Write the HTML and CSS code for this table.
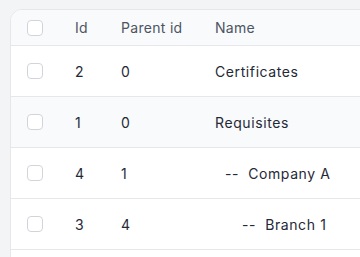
FILE: index.html
```html
<!DOCTYPE html>
<html lang="en">
<head>
    <meta charset="UTF-8">
    <meta name="viewport" content="width=device-width, initial-scale=1.0">
    <title>Categories</title>
    <link rel="stylesheet" href="styles.css">
</head>
<body>
    <div id="page">
        <div id="table-card">
            <table>
                <thead>
                    <tr>
                        <th class="check-cell"><span class="checkbox"></span></th>
                        <th class="id-col">Id</th>
                        <th class="parent-col">Parent id</th>
                        <th class="name-col">Name</th>
                    </tr>
                </thead>
                <tbody>
                    <tr>
                        <td class="check-cell"><span class="checkbox"></span></td>
                        <td>2</td>
                        <td>0</td>
                        <td>Certificates</td>
                    </tr>
                    <tr class="striped">
                        <td class="check-cell"><span class="checkbox"></span></td>
                        <td>1</td>
                        <td>0</td>
                        <td>Requisites</td>
                    </tr>
                    <tr>
                        <td class="check-cell"><span class="checkbox"></span></td>
                        <td>4</td>
                        <td>1</td>
                        <td><span class="level-1">--&nbsp; Company A</span></td>
                    </tr>
                    <tr>
                        <td class="check-cell"><span class="checkbox"></span></td>
                        <td>3</td>
                        <td>4</td>
                        <td><span class="level-2">--&nbsp; Branch 1</span></td>
                    </tr>
                </tbody>
            </table>
        </div>
    </div>
</body>
</html>
```

FILE: styles.css
```css
body {
    margin: 0;
    font-family: Inter, "Liberation Sans", sans-serif;
    background-color: #f3f4f6;
    overflow: hidden;
}

#page {
    padding: 9px 0 0 10px;
}

#table-card {
    width: 520px;
    padding-bottom: 40px;
    background-color: #fff;
    border: 1px solid #e5e7eb;
    border-radius: 12px 0 0 0;
    overflow: hidden;
}

table {
    width: 100%;
    border-collapse: collapse;
    font-size: 14px;
    letter-spacing: 0.6px;
}

th {
    height: 35px;
    padding: 0 16px;
    text-align: left;
    font-weight: 400;
    letter-spacing: 0.3px;
    color: #4b5563;
    background-color: #f9fafb;
    white-space: nowrap;
}

td {
    height: 50px;
    padding: 0 16px;
    color: #1f2937;
    border-top: 1px solid #e5e7eb;
    white-space: nowrap;
}

thead tr {
    border-bottom: 1px solid #e5e7eb;
}

tbody tr:last-child {
    border-bottom: 1px solid #e5e7eb;
}

tr.striped td {
    background-color: #f9fafb;
}

.check-cell {
    width: 16px;
}

.id-col {
    width: 14px;
}

.parent-col {
    width: 62px;
}

.checkbox {
    display: block;
    width: 14px;
    height: 14px;
    border: 1px solid #d1d5db;
    border-radius: 4px;
    background-color: #fff;
}

.level-1 {
    padding-left: 10px;
}

.level-2 {
    padding-left: 27px;
}
```
